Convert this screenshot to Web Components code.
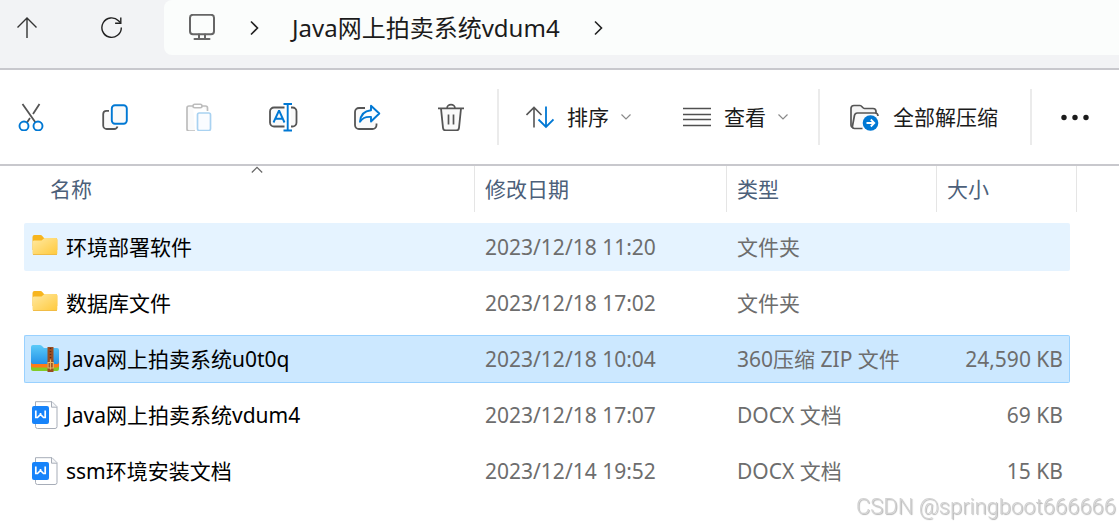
<!DOCTYPE html>
<html lang="zh-CN">
<head>
<meta charset="UTF-8">
<meta name="viewport" content="width=device-width, initial-scale=1">
<title>Java网上拍卖系统vdum4</title>
<style>
  :root {
    --text-color: #1b1b1b;
    --muted-color: #6d6d6d;
    --heading-color: #4c607a;
    --accent-color: #0078d4;
    --line-color: #c8c8cd;
    --divider-color: #ebebeb;
  }

  body {
    margin: 0;
    background: #fff;
    color: var(--text-color);
    font-family: "Noto Sans", "Noto Sans CJK SC", sans-serif;
    font-size: 21px;
    line-height: 28px;
  }
</style>
</head>
<body>
<file-explorer></file-explorer>

<script>
const ICONS = {
  up: [22, 22, '<path d="M10 21V1.500M.5 10.500 10 1l9.500 9.500" stroke="#333" stroke-width="1.400"/>'],
  refresh: [22, 22, '<path d="M20.300 10.500A9.700 9.700 0 1 1 17.500 3.800L19.500 5.800" stroke="#222" stroke-width="1.400"/><path d="M19.800 .5v5.700h-5.700" stroke="#222" stroke-width="1.400"/>'],
  monitor: [28, 28, '<rect x="2" y=".8" width="24" height="19.500" rx="3" stroke="#666" stroke-width="2"/><path d="M11 20.500v4M17 20.500v4M6.500 25h15" stroke="#666" stroke-width="2" stroke-linecap="round"/>'],
  next: [10, 16, '<path d="m2 1.500 6.500 6.500L2 14.500" stroke="#222" stroke-width="1.600"/>'],
  down: [12, 12, '<path d="m1.500 3.500 4.500 4.500 4.500-4.500" stroke="#8a8a8a" stroke-width="1.200"/>'],
  sorted: [12, 8, '<path d="m.8 6.500 5.200-5.200 5.200 5.200" stroke="#666" stroke-width="1.200"/>'],
  cut: [28, 28, '<path d="m5.500 1 13 18.500M22.500 1 16 11M13 15l-3 4.500" stroke="#555" stroke-width="1.800"/><circle cx="7" cy="23" r="4.500" stroke="#0078d4" stroke-width="1.900"/><circle cx="21" cy="23" r="4.500" stroke="#0078d4" stroke-width="1.900"/>'],
  copy: [28, 28, '<path d="M8 7.800H5.500A3.300 3.300 0 0 0 2.200 11v11.500a3.500 3.500 0 0 0 3.500 3.500h7.500a3.500 3.500 0 0 0 3.300-2.500" stroke="#555" stroke-width="1.800" fill="#fafafa"/><rect x="10.800" y="2.300" width="15" height="18.500" rx="3.200" stroke="#0078d4" stroke-width="1.900" fill="#fafafa"/>'],
  paste: [28, 28, '<path d="M8 3H4A2 2 0 0 0 2 5v21a2 2 0 0 0 2 2h6M17 3h3.500a2 2 0 0 1 2 2v3" stroke="#bdbdbd" stroke-width="1.700" fill="#fafafa"/><rect x="8" y="1.200" width="9" height="3.500" rx="1.700" stroke="#bdbdbd" stroke-width="1.600" fill="#fff"/><rect x="12.500" y="10" width="13" height="17.500" rx="1.700" stroke="#a9d2f1" stroke-width="1.700" fill="#fafcff"/>'],
  rename: [30, 30, '<path d="M16.500 5.500H6a4 4 0 0 0-4 4v11a4 4 0 0 0 4 4h10.500M23 5.500h1.500a4 4 0 0 1 4 4v11a4 4 0 0 1-4 4H23" stroke="#555" stroke-width="1.800" fill="#fafafa"/><path d="M5.500 20.500 10.800 9h.5l5.200 11.500M7.300 16.800h7.200" stroke="#0078d4" stroke-width="1.900"/><path d="M15.500 2H24M15.500 28.500H24M19.700 2v26.500" stroke="#0078d4" stroke-width="1.900"/>'],
  share: [28, 28, '<path d="M12 5H6a4 4 0 0 0-4 4v13a4 4 0 0 0 4 4h13.500a4 4 0 0 0 4-4V20.500" stroke="#555" stroke-width="1.800" fill="#fafafa"/><path d="M18 2.800 26.300 10.500 18 18.500v-4.500c-5-.5-8.500 1-11 4.800C7.500 12 11 7.800 18 7.200Z" stroke="#0078d4" stroke-width="1.900" stroke-linejoin="round" fill="#fafdff"/>'],
  trash: [28, 28, '<path d="m4 5.500 2 19.300a3 3 0 0 0 3 2.700h10a3 3 0 0 0 3-2.700l2-19.300" stroke="#555" stroke-width="1.800" fill="#fafafa"/><path d="M1 5.300h26M10 5.300a4 3.600 0 0 1 8 0M11.500 11.500v10M16.500 11.500v10" stroke="#555" stroke-width="1.700"/>'],
  sort: [28, 28, '<path d="M8 24.500V4M.5 12 8 4.500l7.500 7.500" stroke="#555" stroke-width="1.600"/><path d="M20 3.500V24M12.500 16.500 20 24l7.500-7.500" stroke="#0078d4" stroke-width="1.800"/>'],
  view: [28, 28, '<path d="M0 5.500h28M0 11.500h28M0 16.500h28M0 22.500h28" stroke="#505050" stroke-width="1.500"/>'],
  extract: [30, 30, '<path d="M3 26a3 3 0 0 1-2-3V6.500a3 3 0 0 1 3-3h6c2 0 2.500 3 4.500 3H23a3 3 0 0 1 3 3v1.500" stroke="#555" stroke-width="1.700" fill="#f5f5f5"/><path d="M12.500 26.500H4.500c-1.500 0-2.200-1-2-2.500L4.500 13.300A3 3 0 0 1 7.500 11H25q3 0 3 3" stroke="#555" stroke-width="1.700" fill="#fafafa"/><circle cx="20.500" cy="21" r="7.800" fill="#0078d4"/><path d="M16.500 21h7.500M20.800 17.500l3.500 3.500-3.500 3.500" stroke="#fff" stroke-width="1.800"/>'],
  more: [28, 28, '<g fill="#1b1b1b"><circle cx="3" cy="14.500" r="2.700"/><circle cx="14" cy="14.500" r="2.700"/><circle cx="25" cy="14.500" r="2.700"/></g>'],
  folder: [28, 28, '<defs><linearGradient id="f" x2="1" y2="1"><stop stop-color="#ffe9a1"/><stop offset="1" stop-color="#ffc93c"/></linearGradient></defs><path d="M1.500 4a2 2 0 0 1 2-2h6q1 0 2 1.200L13 5h11.500a1.800 1.800 0 0 1 1.800 1.800V17H1.500Z" fill="#f7b51e"/><path d="M1.500 9a1.500 1.500 0 0 1 1.500-1.500h7.500L13.500 5h11.300a1.500 1.500 0 0 1 1.500 1.500v13.700a1.500 1.500 0 0 1-1.500 1.500H3A1.500 1.500 0 0 1 1.500 20.200Z" fill="url(#f)"/><path d="M2 21.500h24" stroke="#edb437" stroke-width=".8"/>'],
  zip: [28, 28, '<defs><linearGradient id="z" x2="0" y2="1"><stop stop-color="#5bcaf8"/><stop offset="1" stop-color="#2492e8"/></linearGradient></defs><rect y="16" width="28" height="10" rx="2" fill="#82cb27"/><path d="M0 14h28v6.500q0 2-2 2H2q-2 0-2-2Z" fill="#ff7a16"/><path d="M0 2q0-2 2-2h7q1.500 0 2.500 1.500L13 3h13q2 0 2 2v12q0 2-2 2H2q-2 0-2-2Z" fill="url(#z)"/><path d="M16.500 2H22.500v25h-6Z" fill="#9a4d20"/><path d="M19.500 3v12" stroke="#582c12" stroke-width="1.500" stroke-dasharray="1 2"/><path d="M17 17.500h5.300v5.500H17ZM19.500 14.500v10" stroke="#e7b564" stroke-width="1.200"/>'],
  word: [28, 28, '<path d="M4.500 .7h16.500l5 5v19.800a2 2 0 0 1-2 2h-17.500a2 2 0 0 1-2-2Z" fill="#fff" stroke="#a7adb8"/><path d="M20.500 .7v5.500h5.500" stroke="#a7adb8" fill="#f5f6f8"/><rect x="1" y="5" width="17" height="18" rx="2" fill="#1683fa"/><path d="M4.800 9.500v7h1.700l3-3 3 3h1.700v-7M9.500 12v2" stroke="#fff" stroke-width="1.700"/>'],
};

class AppIcon extends HTMLElement {
  constructor() {
    super();
    this.attachShadow({ mode: 'open' });
  }

  connectedCallback() {
    const [width, height, shape] = ICONS[this.getAttribute('name')];
    this.shadowRoot.innerHTML = `
      <style>
        :host { display: inline-flex; flex: none; }
        svg { display: block; }
      </style>
      <svg width="${width}" height="${height}" viewBox="0 0 ${width} ${height}" fill="none" aria-hidden="true">${shape}</svg>
    `;
  }
}

customElements.define('app-icon', AppIcon);

class AddressBar extends HTMLElement {
  constructor() {
    super();
    this.attachShadow({ mode: 'open' });
    this.shadowRoot.innerHTML = `
      <style>
        :host {
          display: flex;
          height: 55px;
          padding-bottom: 13px;
          background: #f2f3f5;
          border-bottom: 2px solid var(--line-color);
        }

        .history {
          display: flex;
          align-items: center;
          gap: 28px;
          padding: 0 24px 0 0;
        }

        button {
          display: flex;
          align-items: center;
          justify-content: center;
          width: 56px;
          height: 48px;
          padding: 0;
          border: none;
          border-radius: 6px;
          background: none;
        }

        button:hover { background: #e6e7e9; }

        nav {
          flex: 1;
          display: flex;
          align-items: center;
          gap: 33px;
          padding-left: 24px;
          border-radius: 8px 0 0 8px;
          background: #fbfdfc;
          font-size: 24px;
          white-space: nowrap;
        }

        a {
          display: flex;
          color: inherit;
          text-decoration: none;
        }
      </style>
      <div class="history">
        <button type="button" aria-label="向上"><app-icon name="up"></app-icon></button>
        <button type="button" aria-label="刷新"><app-icon name="refresh"></app-icon></button>
      </div>
      <nav>
        <a href="#" aria-label="此电脑"><app-icon name="monitor"></app-icon></a>
        <app-icon name="next"></app-icon>
        <a href="#"><slot></slot></a>
        <app-icon name="next"></app-icon>
      </nav>
    `;
  }
}

customElements.define('address-bar', AddressBar);

class ToolButton extends HTMLElement {
  constructor() {
    super();
    this.attachShadow({ mode: 'open' });
  }

  connectedCallback() {
    const label = this.getAttribute('label');
    this.shadowRoot.innerHTML = `
      <style>
        :host { display: block; }

        button {
          display: flex;
          align-items: center;
          justify-content: center;
          min-width: 56px;
          height: 56px;
          padding: 0;
          border: none;
          border-radius: 6px;
          background: none;
          color: inherit;
          font: inherit;
          white-space: nowrap;
        }

        button:enabled:hover { background: #f3f3f3; }

        .text { padding: 0 25px; }
        .text span { margin-left: 13px; }
        .text app-icon + span + app-icon { margin-left: 11px; }
      </style>
      <button type="button" class="${label ? '' : 'text'}"
        ${label ? `aria-label="${label}"` : ''} ${this.hasAttribute('disabled') ? 'disabled' : ''}>
        <app-icon name="${this.getAttribute('icon')}"></app-icon>
        ${label ? '' : '<span><slot></slot></span>'}
        ${this.hasAttribute('menu') ? '<app-icon name="down"></app-icon>' : ''}
      </button>
    `;
  }
}

customElements.define('tool-button', ToolButton);

class CommandBar extends HTMLElement {
  constructor() {
    super();
    this.attachShadow({ mode: 'open' });
    this.shadowRoot.innerHTML = `
      <style>
        :host {
          display: flex;
          align-items: center;
          height: 94px;
          border-bottom: 2px solid var(--line-color);
        }

        .group {
          display: flex;
          padding: 0 7px 0 5px;
          border-right: 2px solid var(--divider-color);
        }

        .edit {
          gap: 28px;
          padding: 0 18px 0 3px;
        }

        .arrange { padding: 0 4px 0 2px; gap: 1px; }

        .last {
          border: none;
          padding: 0 15px;
        }
      </style>
      <div class="group edit">
        <tool-button icon="cut" label="剪切"></tool-button>
        <tool-button icon="copy" label="复制"></tool-button>
        <tool-button icon="paste" label="粘贴" disabled></tool-button>
        <tool-button icon="rename" label="重命名"></tool-button>
        <tool-button icon="share" label="共享"></tool-button>
        <tool-button icon="trash" label="删除"></tool-button>
      </div>
      <div class="group arrange">
        <tool-button icon="sort" menu>排序</tool-button>
        <tool-button icon="view" menu>查看</tool-button>
      </div>
      <div class="group">
        <tool-button icon="extract">全部解压缩</tool-button>
      </div>
      <div class="group last">
        <tool-button icon="more" label="查看更多"></tool-button>
      </div>
    `;
  }
}

customElements.define('command-bar', CommandBar);

class FileList extends HTMLElement {
  constructor() {
    super();
    this.attachShadow({ mode: 'open' });
    this.files = [
      { icon: 'folder', name: '环境部署软件', date: '2023/12/18 11:20', type: '文件夹', size: '', state: 'hover' },
      { icon: 'folder', name: '数据库文件', date: '2023/12/18 17:02', type: '文件夹', size: '' },
      { icon: 'zip', name: 'Java网上拍卖系统u0t0q', date: '2023/12/18 10:04', type: '360压缩 ZIP 文件', size: '24,590 KB', state: 'selected' },
      { icon: 'word', name: 'Java网上拍卖系统vdum4', date: '2023/12/18 17:07', type: 'DOCX 文档', size: '69 KB' },
      { icon: 'word', name: 'ssm环境安装文档', date: '2023/12/14 19:52', type: 'DOCX 文档', size: '15 KB' },
    ];
  }

  connectedCallback() {
    this.render();
  }

  render() {
    this.shadowRoot.innerHTML = `
      <style>
        :host {
          display: block;
          padding: 0 49px 16px 24px;
        }

        table {
          width: 100%;
          margin-top: -8px;
          border-spacing: 0 8px;
          table-layout: fixed;
          white-space: nowrap;
        }

        .date { width: 252px; }
        .type { width: 210px; }
        .size { width: 133px; }

        th {
          padding: 0 0 3px;
          color: var(--heading-color);
          font-weight: normal;
          text-align: left;
        }

        th div {
          position: relative;
          display: flex;
          align-items: center;
          height: 46px;
          padding-left: 10px;
          border-right: 1px solid #e5e5e5;
        }

        th:first-child div {
          margin-left: 16px;
        }

        /* The last heading runs a little past the rows */
        th:last-child div { margin-right: -7px; }

        .arrow {
          position: absolute;
          top: 0;
          left: 50%;
          transform: translateX(-50%);
        }

        td {
          box-sizing: border-box;
          height: 48px;
          padding: 0 10px;
          border: solid transparent;
          border-width: 1px 0;
          color: var(--muted-color);
        }

        td:first-child {
          padding-left: 6px;
          border-left-width: 1px;
          border-radius: 2px 0 0 2px;
          color: #000;
        }

        td:last-child {
          padding-right: 6px;
          border-right-width: 1px;
          border-radius: 0 2px 2px 0;
          text-align: right;
        }

        .name {
          display: flex;
          align-items: center;
          gap: 7px;
        }

        .hover td { background: #e5f3ff; }

        .selected td {
          background: #cce8ff;
          border-color: #99d1ff;
        }
      </style>
      <table>
        <colgroup><col><col class="date"><col class="type"><col class="size"></colgroup>
        <thead>
          <tr>
            <th scope="col" aria-sort="ascending"><div>名称<app-icon class="arrow" name="sorted"></app-icon></div></th>
            <th scope="col"><div>修改日期</div></th>
            <th scope="col"><div>类型</div></th>
            <th scope="col"><div>大小</div></th>
          </tr>
        </thead>
        <tbody>
          ${this.files.map(file => `
          <tr class="${file.state || ''}">
            <td><div class="name"><app-icon name="${file.icon}"></app-icon><span>${file.name}</span></div></td>
            <td>${file.date}</td>
            <td>${file.type}</td>
            <td>${file.size}</td>
          </tr>
          `).join('')}
        </tbody>
      </table>
    `;
  }
}

customElements.define('file-list', FileList);

class WaterMark extends HTMLElement {
  constructor() {
    super();
    this.attachShadow({ mode: 'open' });
    this.shadowRoot.innerHTML = `
      <style>
        :host {
          position: fixed;
          right: 3px;
          bottom: 5px;
          color: #d2d2d2;
          font-family: Roboto, sans-serif;
          font-size: 22px;
          font-weight: 300;
          text-shadow: 1px 1px 1px #b4b4b4;
          pointer-events: none;
        }
      </style>
      <slot></slot>
    `;
  }
}

customElements.define('water-mark', WaterMark);

class FileExplorer extends HTMLElement {
  constructor() {
    super();
    this.attachShadow({ mode: 'open' });
    this.shadowRoot.innerHTML = `
      <style>
        :host { display: block; }
      </style>
      <address-bar>Java网上拍卖系统vdum4</address-bar>
      <command-bar></command-bar>
      <file-list></file-list>
      <water-mark>CSDN @springboot666666</water-mark>
    `;
  }
}

customElements.define('file-explorer', FileExplorer);
</script>
</body>
</html>
